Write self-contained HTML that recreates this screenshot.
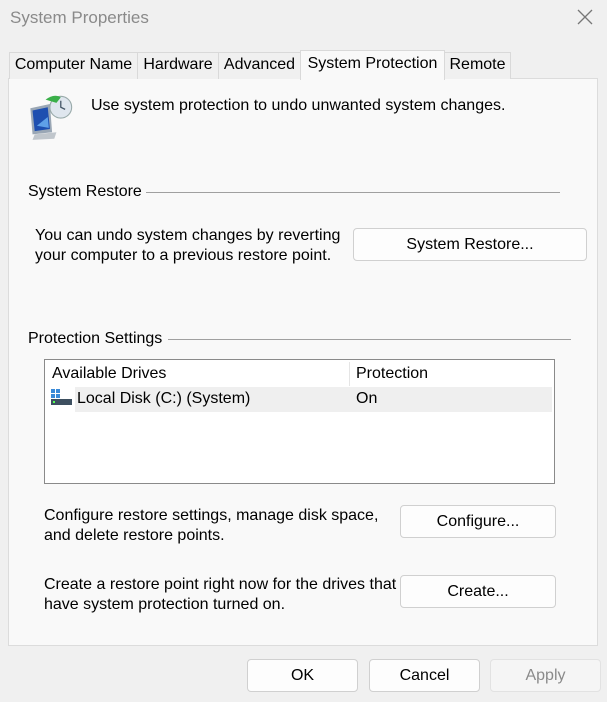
<!DOCTYPE html>
<html><head><style>
*{margin:0;padding:0;box-sizing:border-box}
body{width:607px;height:702px;background:#f0f0f0;font-family:"Liberation Sans",sans-serif;font-size:16px;color:#000;position:relative;overflow:hidden}
.a{position:absolute;white-space:nowrap}
.tab{position:absolute;top:52px;height:27px;border:1px solid #d9d9d9;border-bottom:none;background:#f0f0f0;font-size:16px;padding-top:3px;text-align:center;white-space:nowrap}
.panel{position:absolute;left:8px;top:78px;width:590px;height:568px;background:#f9f9f9;border:1px solid #dcdcdc}
.btn{position:absolute;background:#fdfdfd;border:1px solid #d0d0d0;border-radius:4px;text-align:center;font-size:16px}
.line{position:absolute;height:1px;background:#a0a0a0}
</style></head><body>
<div class="a" style="left:10px;top:8px;font-size:17px;color:#8a8a8a">System Properties</div>
<svg class="a" style="left:577px;top:9px" width="16" height="16"><path d="M1 1L15 15M15 1L1 15" stroke="#777" stroke-width="1.3"/></svg>
<div class="panel"></div>
<div class="tab" style="left:9px;width:129px">Computer Name</div>
<div class="tab" style="left:137px;width:82px">Hardware</div>
<div class="tab" style="left:218px;width:83px">Advanced</div>
<div class="tab" style="left:300px;width:145px;top:50px;height:30px;background:#f9f9f9;padding-top:4px;z-index:2">System Protection</div>
<div class="tab" style="left:444px;width:67px">Remote</div>
<svg class="a" style="left:26px;top:93px" width="50" height="48" viewBox="0 0 46 44">
<path d="M4 14L22 10L24 36L6 38Z" fill="#9aa7b5"/>
<path d="M6 16L20 13L22 33L8 35Z" fill="#1e4fb0"/>
<path d="M10 30L20 22L21 32Z" fill="#5fa0e8"/>
<path d="M8 38L28 36L26 42L6 43Z" fill="#c0c6cc"/>
<circle cx="32" cy="13" r="10" fill="#dfe6ee" stroke="#9aa" stroke-width="1"/>
<path d="M32 7V13L36 15" stroke="#456" stroke-width="1.2" fill="none"/>
<path d="M18 6Q26 0 32 4L28 9Z" fill="#3bb04a"/>
</svg>
<div class="a" style="left:91px;top:97px">Use system protection to undo unwanted system changes.</div>
<div class="a" style="left:28px;top:183px">System Restore</div>
<div class="line" style="left:146px;top:192px;width:414px"></div>
<div class="a" style="left:35px;top:226px;line-height:20px">You can undo system changes by reverting<br>your computer to a previous restore point.</div>
<div class="btn" style="left:353px;top:228px;width:234px;height:33px;line-height:31px">System Restore...</div>
<div class="a" style="left:28px;top:330px">Protection Settings</div>
<div class="line" style="left:168px;top:339px;width:403px"></div>
<div class="a" style="left:44px;top:359px;width:511px;height:125px;background:#fff;border:1px solid #8a8a8a"></div>
<div class="a" style="left:349px;top:362px;width:1px;height:24px;background:#e5e5e5"></div>
<div class="a" style="left:52px;top:365px">Available Drives</div>
<div class="a" style="left:356px;top:365px">Protection</div>
<div class="a" style="left:75px;top:387px;width:477px;height:25px;background:#efefef"></div>
<svg class="a" style="left:50px;top:388px" width="22" height="20">
<rect x="1" y="1" width="4" height="4" fill="#3a8ad8"/><rect x="6" y="1" width="4" height="4" fill="#3a8ad8"/><rect x="1" y="6" width="4" height="4" fill="#3a8ad8"/><rect x="6" y="6" width="4" height="4" fill="#3a8ad8"/>
<rect x="1" y="11" width="21" height="6" fill="#3d4f60"/><rect x="3" y="13" width="2" height="2" fill="#5f5"/>
</svg>
<div class="a" style="left:77px;top:390px">Local Disk (C:) (System)</div>
<div class="a" style="left:356px;top:390px">On</div>
<div class="a" style="left:44px;top:506px;line-height:20px">Configure restore settings, manage disk space,<br>and delete restore points.</div>
<div class="btn" style="left:400px;top:505px;width:156px;height:33px;line-height:31px">Configure...</div>
<div class="a" style="left:44px;top:575px;line-height:20px">Create a restore point right now for the drives that<br>have system protection turned on.</div>
<div class="btn" style="left:400px;top:575px;width:156px;height:33px;line-height:31px">Create...</div>
<div class="btn" style="left:247px;top:659px;width:111px;height:33px;line-height:31px">OK</div>
<div class="btn" style="left:369px;top:659px;width:111px;height:33px;line-height:31px">Cancel</div>
<div class="btn" style="left:490px;top:659px;width:111px;height:33px;line-height:31px;color:#8a8a8a;background:#f5f5f5;border-color:#e2e2e2">Apply</div>
</body></html>
